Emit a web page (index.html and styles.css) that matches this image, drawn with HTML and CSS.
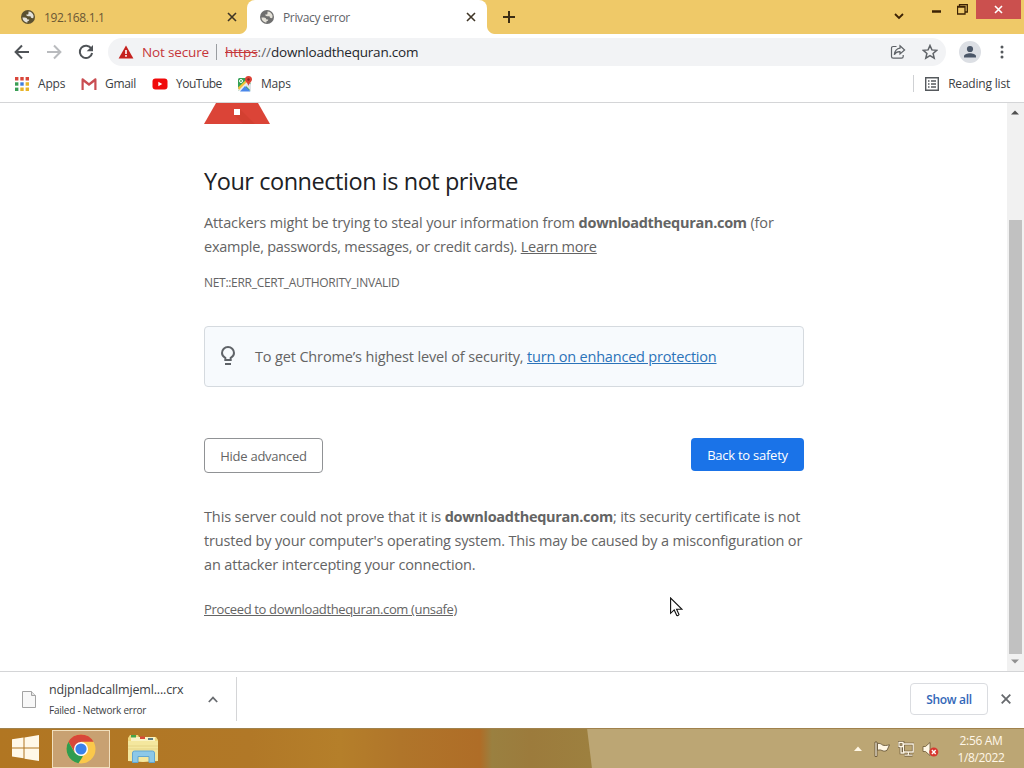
FILE: index.html
```
<!DOCTYPE html>
<html lang="en">
<head>
    <meta charset="UTF-8">
    <meta name="viewport" content="width=device-width, initial-scale=1.0">
    <title>Privacy error</title>
    <link rel="stylesheet" href="styles.css">
</head>
<body>
    <svg class="defs" width="0" height="0">
        <symbol id="globe" viewBox="0 0 16 16">
            <circle cx="8" cy="8" r="7" fill="currentColor"/>
            <path d="M2.400 8.600H5q2 0 2.500 1.800h1.800q0 1.800-1.800 1.800l-.2 1.600Q2.900 13 2.400 8.600zM8.500 2.500c2.600.1 4.500 1.700 5 3.900.1 1.200.1 2-.5 2.900L11 8.800 10.500 7.200H8q-1.800 0-1.800-1.700h1.500Q8.500 5.500 8.500 4z" class="globe-land"/>
        </symbol>
    </svg>

    <div id="tab-strip">
        <div class="tab">
            <svg class="favicon" width="16" height="16"><use href="#globe"/></svg>
            <span class="tab-title tab-ip">192.168.1.1</span>
            <svg class="tab-close" width="10" height="10" viewBox="0 0 10 10"><path d="M1 1l8 8M9 1L1 9"/></svg>
        </div>
        <div class="tab active">
            <svg class="favicon" width="16" height="16"><use href="#globe"/></svg>
            <span class="tab-title">Privacy error</span>
            <svg class="tab-close" width="10" height="10" viewBox="0 0 10 10"><path d="M1 1l8 8M9 1L1 9"/></svg>
        </div>
        <svg class="new-tab" width="12" height="12" viewBox="0 0 12 12"><path d="M6 0v12M0 6h12"/></svg>
        <div class="window-controls">
            <svg class="tab-search" width="10" height="7" viewBox="0 0 10 7"><path d="M1 1l4 4 4-4"/></svg>
            <svg class="minimize" width="9" height="3" viewBox="0 0 9 3"><path d="M0 1.500h9"/></svg>
            <svg class="restore" width="11" height="11" viewBox="0 0 11 11"><path d="M.5 2.500h7.500v7.500H.5zM2.500 2V.7h7.800V8H8.500M.5 3.200H8"/></svg>
            <div class="window-close">
                <svg width="9" height="9" viewBox="0 0 9 9"><path d="M1 1l7 7M8 1L1 8"/></svg>
            </div>
        </div>
    </div>

    <div id="toolbar">
        <svg class="nav" width="16" height="16" viewBox="0 0 16 16"><path d="M15 8H2M8 1.500L1.600 8 8 14.500"/></svg>
        <svg class="nav disabled" width="16" height="16" viewBox="0 0 16 16"><path d="M1 8h13M8 1.500L14.400 8 8 14.500"/></svg>
        <svg class="nav" width="16" height="16" viewBox="0 0 16 16"><path d="M13.300 4.600A6.200 6.200 0 1 0 14.100 9"/><path class="solid" d="M15 1v6.300H8.700z"/></svg>
        <div class="omnibox">
            <svg width="16" height="14" viewBox="0 0 16 14"><path d="M8 .5L15.400 13.500H.6z" fill="#c5221f"/><path d="M8 5v4M8 10v1.700" stroke="#fff" stroke-width="1.600"/></svg>
            <span class="not-secure">Not secure</span>
            <span class="divider"></span>
            <span class="url"><s>https</s><i>://</i>downloadthequran.com</span>
            <svg class="share" width="16" height="16" viewBox="0 0 16 16"><path d="M6.500 2.500H3.200Q1.500 2.500 1.500 4.200v8.300q0 1.700 1.700 1.700h8.300q1.700 0 1.700-1.700v-1.500"/><path d="M10 1.800L14.600 6 10 10V7.700C7.300 7.500 5.600 8.500 4.300 10.800 4.700 7.300 6.500 4.700 10 4.200z"/></svg>
            <svg class="star" width="16" height="16" viewBox="0 0 16 16"><path d="M8 1.500l1.900 4.400 4.800.4-3.600 3.200 1.100 4.700L8 11.700l-4.200 2.500 1.100-4.700L1.300 6.300l4.800-.4z"/></svg>
        </div>
        <svg class="avatar" width="22" height="22" viewBox="0 0 22 22"><circle cx="11" cy="11" r="11" fill="#dcdfe4"/><circle cx="11" cy="8" r="3.100"/><path d="M5 16.500v-1.300c0-2 3.500-3 6-3s6 1 6 3v1.300z"/></svg>
        <svg class="menu" width="4" height="14" viewBox="0 0 4 14"><circle cx="2" cy="2" r="1.500"/><circle cx="2" cy="7" r="1.500"/><circle cx="2" cy="12" r="1.500"/></svg>
    </div>

    <div id="bookmarks">
        <svg class="apps-icon" width="14" height="14" viewBox="0 0 14 14">
            <path fill="#d9463a" d="M0 0h3.400v3.400H0zM5.300 0h3.400v3.400H5.300zM10.600 0H14v3.400h-3.400z"/>
            <path fill="#3a9e55" d="M0 5.300h3.400v3.400H0z"/>
            <path fill="#3f7de0" d="M5.300 5.300h3.400v3.400H5.300z"/>
            <path fill="#e8b429" d="M10.600 5.300H14v3.400h-3.400zM5.300 10.600h3.400V14H5.300zM10.600 10.600H14V14h-3.400z"/>
            <path fill="#3a9e55" d="M0 10.600h3.400V14H0z"/>
        </svg>
        <span class="bm-apps">Apps</span>
        <svg class="gmail-icon" width="16" height="12" viewBox="0 0 16 12">
            <path fill="#c94d52" d="M.5 1.500Q.5 0 2 .3L8 5l6-4.700q1.500-.3 1.500 1.200V12h-2.200V4L8 8 2.700 4V12H.5z"/>
        </svg>
        <span class="bm-gmail">Gmail</span>
        <svg class="youtube-icon" width="16" height="12" viewBox="0 0 16 12"><rect x=".5" y=".5" width="15" height="11" rx="3" fill="#f00a0a"/><path d="M6.300 3.700v4.600L10.300 6z" fill="#fff"/></svg>
        <span class="bm-youtube">YouTube</span>
        <svg class="maps-icon" width="16" height="16" viewBox="0 0 16 16">
            <path fill="#34a056" d="M1 3.500Q1 2 2.500 2H10l3.500 5v7.500H1z"/>
            <path fill="#e9edf0" d="M1 13L12 2.500l2 2.500-9 10H2.500Q1 15 1 13.500z"/>
            <path fill="#f3c33c" d="M1 11.500L10 3l1.300 1.500L2 14z"/>
            <path fill="#4a87ea" d="M3 15.500L8 10l5.500 5.500z"/>
            <path fill="#dfe4e8" d="M8.500 9.500L12 7l2 1.500V15z"/>
            <circle cx="4" cy="5" r="1.500" fill="none" stroke="#fff"/>
            <path fill="#dc4236" d="M11.500 0a3.500 3.500 0 0 1 3.500 3.500c0 2.500-3 3.300-3.500 6.500C11 6.800 8 6 8 3.500A3.500 3.500 0 0 1 11.500 0z"/>
            <circle cx="11.500" cy="3.500" r="1.200" fill="#8c2420"/>
        </svg>
        <span class="bm-maps">Maps</span>
        <div class="reading-list">
            <svg width="14" height="14" viewBox="0 0 14 14"><path d="M.7.700h12.600v12.600H.7z"/><path d="M3 4h1.500M6 4h5M3 7h1.500M6 7h5M3 10h1.500M6 10h5"/></svg>
            <span>Reading list</span>
        </div>
    </div>

    <div id="viewport">
        <div class="interstitial">
            <svg class="warning" width="66" height="21" viewBox="0 0 66 21"><path fill="#db4437" d="M12 0h42l12 21H0z"/><path fill="#c53929" d="M36 6l15 15H39l-9-9z" opacity=".35"/><path fill="#fff" d="M30 6h6v6h-6z"/></svg>
            <h1><span>Your connection is not private</span></h1>
            <p>
                <span class="line l1">Attackers might be trying to steal your information from <b>downloadthequran.com</b> (for</span>
                <span class="line l2">example, passwords, messages, or credit cards). <a class="learn">Learn more</a></span>
            </p>
            <div class="error-code"><span>NET::ERR_CERT_AUTHORITY_INVALID</span></div>
            <div class="enhanced">
                <svg width="14" height="20" viewBox="0 0 14 20"><path d="M4.300 14v-2.200C2.200 10.700 1 9 1 7a6 6 0 0 1 12 0c0 2-1.200 3.700-3.300 4.800V14z" fill="none" stroke="#5f6368" stroke-width="2"/><path d="M4 17h6v2H4z" fill="#5f6368"/></svg>
                <span>To get Chrome’s highest level of security, <a>turn on enhanced protection</a></span>
            </div>
            <div class="buttons">
                <button class="details"><span>Hide advanced</span></button>
                <button class="primary"><span>Back to safety</span></button>
            </div>
            <p>
                <span class="line l3">This server could not prove that it is <b>downloadthequran.com</b>; its security certificate is not</span>
                <span class="line l4">trusted by your computer's operating system. This may be caused by a misconfiguration or</span>
                <span class="line l5">an attacker intercepting your connection.</span>
            </p>
            <a class="proceed">Proceed to downloadthequran.com (unsafe)</a>
        </div>
        <div class="scrollbar">
            <svg width="8" height="5" viewBox="0 0 8 5"><path d="M0 4.500L4 .5l4 4z" fill="#505050"/></svg>
            <div class="thumb"></div>
            <svg width="8" height="5" viewBox="0 0 8 5"><path d="M0 .5l4 4 4-4z" fill="#909090"/></svg>
        </div>
    </div>

    <div id="downloads">
        <div class="download-item">
            <svg width="14" height="17" viewBox="0 0 14 17"><path d="M.5.500h9l4 4v12H.5z" fill="#f8f8f8" stroke="#a3a3a3"/><path d="M9.500.5v4h4" fill="#e4e4e4" stroke="#a3a3a3"/></svg>
            <div class="download-text">
                <span class="file-name">ndjpnladcallmjeml....crx</span>
                <span class="file-status">Failed - Network error</span>
            </div>
            <svg class="chevron" width="10" height="7" viewBox="0 0 10 7"><path d="M.8 6L5 1.600 9.200 6"/></svg>
        </div>
        <button class="show-all"><span>Show all</span></button>
        <svg class="shelf-close" width="10" height="10" viewBox="0 0 10 10"><path d="M.7.700l8.600 8.600M9.300.7L.7 9.300"/></svg>
    </div>

    <div id="taskbar">
        <svg class="start" width="27" height="26" viewBox="0 0 27 26"><path fill="#fff8e8" d="M0 4.200l11.500-1.600v9.800H0zM12.500 2.400L27 0v12.400H12.500zM0 13.400h11.500v9.800L0 21.600zM12.500 13.400H27V26l-14.500-2.200z"/></svg>
        <div class="task-button">
            <svg width="30" height="30" viewBox="0 0 30 30">
                <circle cx="15" cy="15" r="14.500" fill="#fbc84b"/>
                <path fill="#d8473a" d="M2.400 7.800A14.500 14.500 0 0 1 27.600 7.800H15L9 18.500z"/>
                <path fill="#2f9c50" d="M2.400 7.800L8.800 18.700 15 22l2 .2-4.500 7.100A14.500 14.500 0 0 1 2.400 7.800z"/>
                <circle cx="15" cy="15" r="7" fill="#fff"/>
                <circle cx="15" cy="15" r="5.600" fill="#3b82ea"/>
            </svg>
        </div>
        <svg class="explorer" width="32" height="30" viewBox="0 0 32 30">
            <path fill="#f0d97e" d="M1 4l2-3h8l1 2h17l2 3v21H1z"/>
            <path fill="#f9f3c4" d="M4 3h24v4H4z"/>
            <path fill="#45a548" d="M4 1h5v2.500H4z"/><path fill="#d94a38" d="M13 2.500h5V5h-5z"/><path fill="#5b7d83" d="M21 4h5v2h-5z"/>
            <path fill="#f4e79e" d="M1 7h30v20l-15 1L1 27z"/>
            <path d="M1 12h30M1 15h30" stroke="#e5d486"/>
            <path d="M5.500 28.500V19q0-2 2-2h18q2 0 2 2v9.500H22v-6H11v6z" fill="#8cc8e8" stroke="#62a6d0"/>
        </svg>
        <div class="tray">
            <svg width="8" height="5" viewBox="0 0 8 5"><path d="M0 5l4-4.500L8 5z" fill="#fff7e5"/></svg>
            <svg width="16" height="16" viewBox="0 0 16 16"><path d="M1 1h2v14.500H1z" fill="#fff7e5" stroke="#5c4a2d" stroke-width=".8"/><path d="M3.500 2.500C6 2 7 3 8.500 4c2 .8 4 .6 7-.2l-2.500 5.500c-1.500 1-3.500 1-5 .2C6.500 8.800 5.500 8.700 3.500 9.300z" fill="#fff7e5" stroke="#5c4a2d" stroke-width=".8"/></svg>
            <svg width="16" height="16" viewBox="0 0 16 16"><path d="M5.500 3h9.700v8H5.500zM10.300 11v3M6.500 14.200h8M1 1.500h4v4H1zM3 5.500V12h3.500" fill="none" stroke="#5c4a2d" stroke-width="2.600"/><path d="M5.500 3h9.700v8H5.500zM10.300 11v3M6.500 14.200h8M1 1.500h4v4H1zM3 5.500V12h3.500" fill="none" stroke="#fff7e5" stroke-width="1.300"/></svg>
            <svg width="17" height="16" viewBox="0 0 17 16"><path d="M1 5.500h2.500L8 1.500v13L3.500 10.500H1z" fill="#fff7e5" stroke="#6a5633" stroke-width=".8"/><circle cx="11.800" cy="11" r="4.500" fill="#d7382f"/><path d="M9.900 9.100l3.800 3.800M13.700 9.100l-3.800 3.800" stroke="#fff" stroke-width="1.400"/></svg>
            <div class="clock"><span class="time">2:56 AM</span><span class="date">1/8/2022</span></div>
        </div>
    </div>

    <svg class="cursor" width="13" height="20" viewBox="0 0 13 20"><path d="M.6 1v15.300l3.600-3.400 2.600 5.600q1.400.6 2.200-1L6.600 12.200h5.200z" fill="#fff" stroke="#111" stroke-width="1.100"/></svg>
</body>
</html>
```
FILE: styles.css
```
* {
    box-sizing: border-box;
}
body {
    margin: 0;
    width: 1024px;
    height: 768px;
    overflow: hidden;
    display: flex;
    flex-direction: column;
    background-color: #fff;
    font-family: "Open Sans", "Noto Sans", sans-serif;
    font-size: 12px;
    color: #3c4043;
}
svg {
    display: block;
    flex-shrink: 0;
}
span, a {
    white-space: nowrap;
}
button {
    font-family: inherit;
    margin: 0;
    padding: 0;
}
.defs {
    position: absolute;
}

/* tabs */
#tab-strip {
    flex: 0 0 34px;
    display: flex;
    align-items: center;
    background-color: #efc968;
}
.tab {
    display: flex;
    align-items: center;
    width: 247px;
    height: 34px;
    padding: 0 10px 0 20px;
    color: #6b5835;
}
.tab.active {
    width: 240px;
    padding: 0 11px 0 12px;
    background-color: #fff;
    border-radius: 8px 8px 0 0;
    color: #5f6368;
}
.favicon {
    color: #6f6f6f;
}
.tab:first-child .favicon {
    color: #5b5030;
}
.globe-land {
    fill: #e4e1d8;
}
.tab-title {
    margin-left: 8px;
    letter-spacing: -0.35px;
}
.tab-close {
    margin-left: auto;
    fill: none;
    stroke: #3f3526;
    stroke-width: 1.6;
}
.new-tab {
    margin-left: 16px;
    stroke: #3c2d14;
    stroke-width: 2;
}
/* flared feet of the selected tab */
.tab:first-child {
    background: radial-gradient(circle at 239px 26px, #efc968 7.500px, #fff 8.500px) 239px 26px / 8px 8px no-repeat;
    background: radial-gradient(circle at 0 0, transparent 7.500px, #fff 8.500px) 100% 100% / 8px 8px no-repeat;
}
.new-tab {
    box-sizing: content-box;
    padding: 11px 8px 11px 16px;
    margin-left: 0;
    background: radial-gradient(circle at 100% 0, transparent 7.500px, #fff 8.500px) 0 100% / 8px 8px no-repeat;
}
.window-controls {
    display: flex;
    align-items: flex-start;
    align-self: flex-start;
    margin-left: auto;
    padding-right: 3px;
    fill: none;
    stroke: #3c2205;
}
.tab-search {
    margin: 13px 28px 0 0;
    stroke-width: 1.8;
}
.minimize {
    margin: 10px 16px 0 0;
    stroke-width: 2.5;
}
.restore {
    margin: 4px 8px 0 0;
    stroke-width: 1.3;
}
.window-close {
    width: 45px;
    height: 19px;
    display: flex;
    align-items: center;
    justify-content: center;
    background-color: #cb504e;
    stroke: #fff;
    stroke-width: 1.6;
}

/* toolbar */
#toolbar {
    flex: 0 0 36px;
    display: flex;
    align-items: center;
    padding: 0 20px 0 14px;
}
.nav {
    margin-right: 16px;
    fill: none;
    stroke: #4f5357;
    stroke-width: 2;
}
.nav.disabled {
    stroke: #b9bbbe;
}
.nav .solid {
    fill: #4f5357;
    stroke: none;
}
.omnibox {
    display: flex;
    align-items: center;
    width: 838px;
    height: 28px;
    margin-left: -2px;
    padding: 0 8px 0 10px;
    border-radius: 14px;
    background-color: #f2f3f5;
    font-size: 13.5px;
}
.not-secure {
    width: 67px;
    margin-left: 8px;
    color: #c5363a;
    letter-spacing: -0.15px;
}
.divider {
    width: 1px;
    height: 16px;
    margin: 0 8px 0 7px;
    background-color: #9a9da1;
}
.url {
    color: #24272b;
    letter-spacing: -0.22px;
}
.url s {
    color: #c5363a;
    letter-spacing: 0;
}
.url i {
    font-style: normal;
    color: #5f6368;
    letter-spacing: 0;
}
.share, .star {
    fill: none;
    stroke: #5f6368;
    stroke-width: 1.2;
}
.share {
    margin-left: auto;
    margin-right: 16px;
}
.star {
    stroke-width: 1.5;
}
.avatar {
    margin-left: 13px;
    fill: #4b5768;
}
.menu {
    margin-left: auto;
    fill: #55595d;
}

/* bookmarks */
#bookmarks {
    flex: 0 0 33px;
    display: flex;
    align-items: center;
    padding: 0 14px 5px 15px;
    border-bottom: 1px solid #d4d5d7;
}
#bookmarks > span {
    margin-left: 9px;
    letter-spacing: -0.2px;
}
#bookmarks .bm-apps {
    width: 43px;
}
#bookmarks .bm-gmail {
    margin-left: 8px;
    width: 47px;
    letter-spacing: -0.3px;
}
#bookmarks .bm-youtube {
    margin-left: 8px;
    width: 61px;
    letter-spacing: -0.5px;
}
#bookmarks .bm-maps {
    margin-left: 8px;
}
.reading-list {
    display: flex;
    align-items: center;
    gap: 9px;
    height: 17px;
    margin-left: auto;
    padding-left: 11px;
    border-left: 1px solid #cfd1d4;
    letter-spacing: -0.2px;
}
.reading-list svg {
    fill: none;
    stroke: #55595d;
    stroke-width: 1.4;
}

/* page */
#viewport {
    flex: 0 0 568px;
    display: flex;
    justify-content: space-between;
}
.interstitial {
    width: 600px;
    margin-left: 204px;
    color: #646464;
    font-size: 14.5px;
    line-height: 24px;
}
h1 {
    margin: 42px 0 0;
    color: #202124;
    font-size: 23.5px;
    font-weight: 400;
    line-height: 30px;
    letter-spacing: -0.45px;
}
p {
    margin: 15px 0 0;
}
.line {
    display: block;
    width: max-content;
}
.line b {
    letter-spacing: -0.3px;
}
.l1, .l3 {
    letter-spacing: -0.12px;
}
.l2 {
    letter-spacing: -0.25px;
}
.l4, .l5 {
    letter-spacing: -0.16px;
}
.learn, .proceed {
    text-decoration: underline;
}
.error-code {
    margin-top: 12px;
    font-size: 12px;
    letter-spacing: -0.3px;
}
.enhanced {
    display: flex;
    align-items: center;
    height: 61px;
    margin-top: 31px;
    padding-left: 17px;
    border: 1px solid #d5dadf;
    border-radius: 4px;
    background-color: #f7fafd;
    letter-spacing: -0.15px;
}
.enhanced svg {
    margin: 0 1px 2px -1px;
}
.enhanced span {
    margin-left: 19px;
}
.enhanced a {
    color: #2b73b9;
    text-decoration: underline;
    letter-spacing: -0.2px;
}
.buttons {
    display: flex;
    justify-content: space-between;
    align-items: flex-start;
    margin-top: 51px;
}
.buttons button {
    border-radius: 4px;
    font-size: 13px;
    letter-spacing: -0.25px;
}
.details {
    width: 119px;
    height: 35px;
    border: 1px solid #909295;
    background-color: #fff;
    color: #646464;
}
.primary {
    width: 113px;
    height: 33px;
    border: 0;
    background-color: #1a73e8;
    color: #fff;
}
.buttons + p {
    margin-top: 32px;
}
.proceed {
    display: block;
    width: max-content;
    margin-top: 20px;
    font-size: 13px;
    letter-spacing: -0.35px;
}
.scrollbar {
    display: flex;
    flex-direction: column;
    align-items: center;
    justify-content: space-between;
    width: 17px;
    padding: 7px 1px 7px 0;
    background-color: #f1f1f1;
}
.thumb {
    width: 13px;
    height: 434px;
    margin-top: 99px;
    background-color: #c1c1c1;
}

/* download shelf */
#downloads {
    flex: 0 0 57px;
    display: flex;
    align-items: center;
    padding: 0 13px 2px 0;
    border-top: 1px solid #d4d5d7;
}
.download-item {
    display: flex;
    align-items: center;
    width: 237px;
    height: 44px;
    padding: 0 18px 0 22px;
    border-right: 1px solid #d4d5d7;
}
.download-text {
    display: flex;
    flex-direction: column;
    margin-left: 13px;
    padding-top: 2px;
}
.file-name {
    font-size: 12.5px;
    line-height: 20px;
    letter-spacing: -0.15px;
}
.file-status {
    font-size: 10px;
    line-height: 20px;
    letter-spacing: -0.23px;
}
.chevron {
    margin-left: auto;
    fill: none;
    stroke: #696c70;
    stroke-width: 1.7;
}
.show-all {
    width: 78px;
    height: 32px;
    margin-left: auto;
    border: 1px solid #dadce0;
    border-radius: 4px;
    background-color: #fff;
    color: #3367b8;
    font-size: 12px;
    font-weight: 600;
    letter-spacing: -0.3px;
}
.shelf-close {
    margin-left: 13px;
    stroke: #66696d;
    stroke-width: 1.8;
}

/* taskbar */
#taskbar {
    flex: 0 0 40px;
    display: flex;
    align-items: center;
    padding-left: 12px;
    background: linear-gradient(83deg, transparent 587px, #bca674 588px), linear-gradient(90deg, #b17622 0, #b17827 250px, #b57f2a 340px, #b0752a 400px, #af6d27 480px, #9a8040 492px, #9c7b3c 530px, #9d803f 590px);
    border-top: 1px solid #a0824d;
}
.start {
    margin: 0 13px 2px 0;
}
.task-button {
    display: flex;
    align-items: center;
    justify-content: center;
    width: 58px;
    height: 38px;
    border: 1px solid #f1dfbd;
    background-color: #c8a172;
}
.explorer {
    margin-left: 17px;
}
.tray {
    display: flex;
    align-items: center;
    margin-left: auto;
    padding-right: 20px;
}
.tray svg + svg {
    margin-left: 8px;
}
.tray svg:first-child + svg {
    margin-left: 12px;
}
.clock {
    display: flex;
    flex-direction: column;
    align-items: center;
    width: 46px;
    margin-left: 19px;
    color: #fff7e8;
    font-size: 12px;
    line-height: 17px;
    letter-spacing: -0.35px;
}

.cursor {
    position: absolute;
    left: 670px;
    top: 597px;
}
```
